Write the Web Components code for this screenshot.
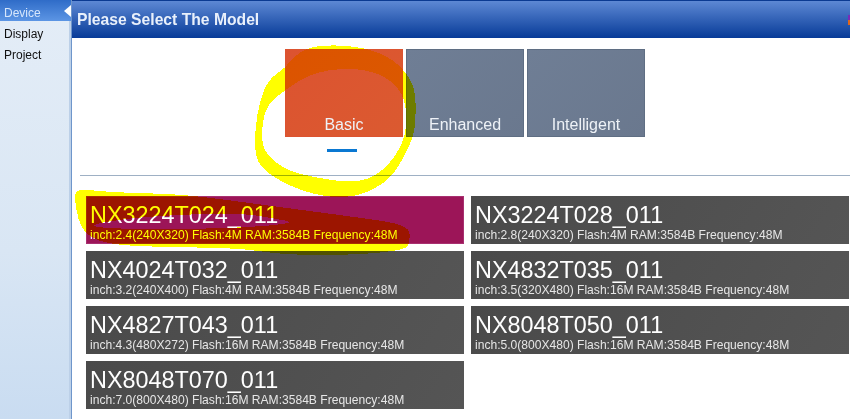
<!DOCTYPE html>
<html>
<head>
<meta charset="utf-8">
<title>Please Select The Model</title>
<style>
  html, body { margin: 0; height: 100%; background: #fff; }
  body { font-family: "Liberation Sans", Arial, sans-serif; overflow: hidden; }
</style>
</head>
<body>
<x-app>
  <x-sidebar slot="side">
    <x-nav-item active>Device</x-nav-item>
    <x-nav-item>Display</x-nav-item>
    <x-nav-item>Project</x-nav-item>
  </x-sidebar>
  <x-header slot="head">Please Select The Model</x-header>
  <x-tabs slot="tabs">
    <x-tab active>Basic</x-tab>
    <x-tab>Enhanced</x-tab>
    <x-tab>Intelligent</x-tab>
  </x-tabs>
  <x-model-list slot="list">
    <x-model-card active name="NX3224T024_011">inch:2.4(240X320) Flash:4M RAM:3584B Frequency:48M</x-model-card>
    <x-model-card name="NX3224T028_011">inch:2.8(240X320) Flash:4M RAM:3584B Frequency:48M</x-model-card>
    <x-model-card name="NX4024T032_011">inch:3.2(240X400) Flash:4M RAM:3584B Frequency:48M</x-model-card>
    <x-model-card name="NX4832T035_011">inch:3.5(320X480) Flash:16M RAM:3584B Frequency:48M</x-model-card>
    <x-model-card name="NX4827T043_011">inch:4.3(480X272) Flash:16M RAM:3584B Frequency:48M</x-model-card>
    <x-model-card name="NX8048T050_011">inch:5.0(800X480) Flash:16M RAM:3584B Frequency:48M</x-model-card>
    <x-model-card name="NX8048T070_011">inch:7.0(800X480) Flash:16M RAM:3584B Frequency:48M</x-model-card>
  </x-model-list>
</x-app>
<x-scribble></x-scribble>

<script>
class XApp extends HTMLElement {
    constructor() {
        super();
        this.attachShadow({ mode: 'open' });
        this.shadowRoot.innerHTML = `
      <style>
        :host {
          display: grid;
          grid-template-columns: 72px 1fr;
          width: 850px;
          height: 419px;
        }
        #main {
          display: flex;
          flex-direction: column;
          min-width: 0;
        }
        #rule {
          height: 1px;
          background-color: #9eb0c4;
          margin: 0 0 20px 8px;
        }
      </style>
      <slot name="side"></slot>
      <div id="main">
        <slot name="head"></slot>
        <slot name="tabs"></slot>
        <div id="rule"></div>
        <slot name="list"></slot>
      </div>
    `;
    }
}

class XSidebar extends HTMLElement {
    constructor() {
        super();
        this.attachShadow({ mode: 'open' });
        this.shadowRoot.innerHTML = `
      <style>
        :host {
          display: flex;
          flex-direction: column;
          box-sizing: border-box;
          border-right: 1px solid #6f96cb;
          box-shadow: inset -2px 0 0 #bcd0e8;
          background: linear-gradient(#e4edf7, #d9e6f4 60%, #c9dcf1);
          overflow: hidden;
        }
      </style>
      <slot></slot>
    `;
    }
}

class XNavItem extends HTMLElement {
    constructor() {
        super();
        this.attachShadow({ mode: 'open' });
        this.shadowRoot.innerHTML = `
      <style>
        :host {
          display: flex;
          align-items: center;
          box-sizing: border-box;
          height: 21px;
          padding: 4px 0 0 4px;
          font-size: 12px;
          color: #111;
          position: relative;
        }
        :host([active]) {
          color: #d6e6fb;
          background: linear-gradient(#2f6cc8, #5c95e4);
        }
        #arrow {
          display: none;
          position: absolute;
          right: 0;
          top: 5px;
          border: 6px solid transparent;
          border-left-width: 0;
          border-right: 7px solid #fff;
        }
        :host([active]) #arrow { display: block; }
      </style>
      <slot></slot>
      <span id="arrow"></span>
    `;
    }
}

class XHeader extends HTMLElement {
    constructor() {
        super();
        this.attachShadow({ mode: 'open' });
        this.shadowRoot.innerHTML = `
      <style>
        :host {
          display: flex;
          align-items: center;
          justify-content: space-between;
          box-sizing: border-box;
          height: 38px;
          padding-left: 5px;
          border-top: 1px solid #0b3a92;
          background: linear-gradient(#5d88d4, #073b98);
          color: #e9f0fb;
          font-size: 15.7px;
          font-weight: bold;
        }
        svg { display: block; flex: none; }
      </style>
      <span><slot></slot></span>
      <svg width="2" height="10" viewBox="0 0 2 10">
        <rect width="2" height="5" fill="#7a2bb8"/>
        <rect y="5" width="2" height="5" fill="#e0661c"/>
      </svg>
    `;
    }
}

class XTabs extends HTMLElement {
    constructor() {
        super();
        this.attachShadow({ mode: 'open' });
        this.shadowRoot.innerHTML = `
      <style>
        :host {
          display: flex;
          gap: 3px;
          height: 137px;
          padding: 11px 0 0 213px;
          box-sizing: border-box;
        }
      </style>
      <slot></slot>
    `;
    }
}

class XTab extends HTMLElement {
    constructor() {
        super();
        this.attachShadow({ mode: 'open' });
        this.shadowRoot.innerHTML = `
      <style>
        :host {
          display: block;
          width: 118px;
          font-size: 16px;
          color: #eef2f7;
        }
        #face {
          display: flex;
          align-items: flex-end;
          justify-content: center;
          box-sizing: border-box;
          height: 88px;
          padding-bottom: 2px;
          background: linear-gradient(135deg, #6f7e95, #6a788e);
          border: 1px solid #5f6e83;
        }
        :host([active]) #face {
          background: linear-gradient(135deg, #dc5330, #db5a30);
          border-color: #dc5330;
        }
        #mark {
          display: none;
          width: 30px;
          height: 3px;
          margin: 12px 0 0 42px;
          background-color: #0a78d2;
        }
        :host([active]) #mark { display: block; }
      </style>
      <div id="face"><slot></slot></div>
      <div id="mark"></div>
    `;
    }
}

class XModelList extends HTMLElement {
    constructor() {
        super();
        this.attachShadow({ mode: 'open' });
        this.shadowRoot.innerHTML = `
      <style>
        :host {
          display: grid;
          grid-template-columns: 378px 378px;
          grid-auto-rows: 48px;
          gap: 7px;
          padding-left: 14px;
        }
      </style>
      <slot></slot>
    `;
    }
}

class XModelCard extends HTMLElement {
    constructor() {
        super();
        this.attachShadow({ mode: 'open' });
        this.shadowRoot.innerHTML = `
      <style>
        :host {
          display: block;
          box-sizing: border-box;
          padding: 6px 0 0 4px;
          color: #fff;
          background: linear-gradient(120deg, #4a4a4a, #555);
          overflow: hidden;
        }
        :host([active]) {
          background: #9c1558;
          box-shadow: inset 0 0 0 1px #a83070;
        }
        #name {
          font-size: 23.4px;
          line-height: 26px;
        }
        #info {
          font-size: 12.08px;
          line-height: 15px;
          color: #e6e6e6;
          white-space: nowrap;
        }
        :host([active]) #info { color: #fff; }
      </style>
      <div id="name"></div>
      <div id="info"><slot></slot></div>
    `;
    }

    connectedCallback() {
        this.shadowRoot.getElementById('name').textContent = this.getAttribute('name');
    }
}

// the two yellow marker strokes someone painted over the screenshot
const SCRIBBLES = [
    [
        [[315,45],[358,46],[388,56],[405,71],[415,88],[416,118],[413,138],[402,161],[388,181],[362,195],[335,198],[305,192],[278,180],[262,168],[255,155],[255,128],[260,101],[268,80],[285,68],[295,55]],
        [[345,68],[372,71],[392,81],[405,98],[407,125],[402,145],[388,166],[368,180],[345,182],[318,178],[288,171],[270,158],[262,145],[262,125],[267,105],[285,90],[312,73]]
    ],
    [
        [[75,188],[105,192],[172,194],[205,197],[279,207],[355,217],[409,225],[410,242],[405,250],[355,255],[285,255],[239,248],[155,247],[105,244],[82,232],[75,205]],
        [[85,226],[122,219],[172,215],[239,213],[272,218],[298,223],[239,228],[172,229],[122,229]]
    ]
];

class XScribble extends HTMLElement {
    constructor() {
        super();
        this.attachShadow({ mode: 'open' });
        const d = SCRIBBLES.flat().map(ring => this.smooth(ring)).join(' ');
        this.shadowRoot.innerHTML = `
      <style>
        :host {
          position: absolute;
          left: 0;
          top: 0;
          width: 850px;
          height: 419px;
          mix-blend-mode: multiply;
          pointer-events: none;
        }
        svg { display: block; }
      </style>
      <svg width="850" height="419" viewBox="0 0 850 419" shape-rendering="crispEdges">
        <path d="${d}" fill="#ffff00" fill-rule="evenodd"/>
      </svg>
    `;
    }

    smooth(ring) {
        const mid = (a, b) => [(a[0] + b[0]) / 2, (a[1] + b[1]) / 2];
        const start = mid(ring[ring.length - 1], ring[0]);
        let d = `M${start[0]} ${start[1]}`;
        ring.forEach((p, i) => {
            const m = mid(p, ring[(i + 1) % ring.length]);
            d += ` Q${p[0]} ${p[1]} ${m[0]} ${m[1]}`;
        });
        return d + 'Z';
    }
}

customElements.define('x-app', XApp);
customElements.define('x-sidebar', XSidebar);
customElements.define('x-nav-item', XNavItem);
customElements.define('x-header', XHeader);
customElements.define('x-tabs', XTabs);
customElements.define('x-tab', XTab);
customElements.define('x-model-list', XModelList);
customElements.define('x-model-card', XModelCard);
customElements.define('x-scribble', XScribble);
</script>
</body>
</html>
